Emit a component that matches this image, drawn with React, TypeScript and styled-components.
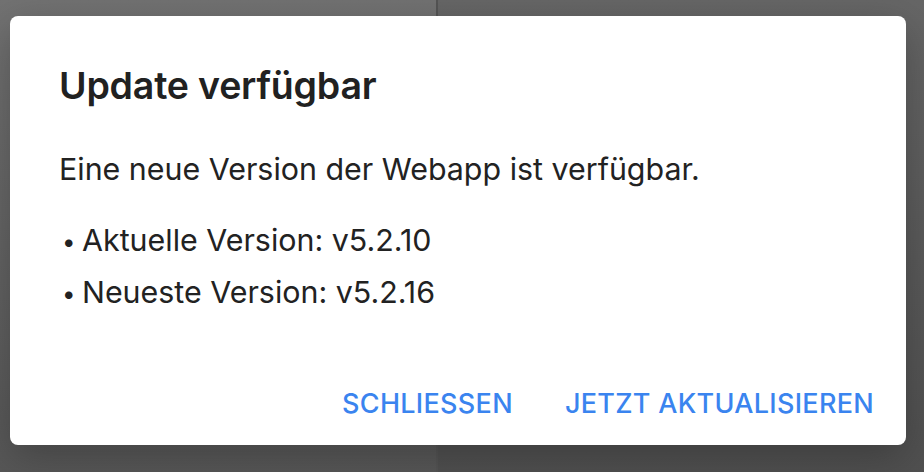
import styled, { createGlobalStyle } from "styled-components"

const GlobalStyle = createGlobalStyle`
  html, body {
    margin: 0;
    padding: 0;
    height: 100%;
  }
  body {
    font-family: Inter, "Noto Sans", sans-serif;
    -webkit-font-smoothing: antialiased;
  }
  #root {
    height: 100%;
  }
`

const Page = styled.div`
  position: relative;
  display: flex;
  width: 924px;
  height: 472px;
  overflow: hidden;
`

type PaneProps = {
  top: string,
  bottom: string
}

const Pane = styled.div<PaneProps>`
  background: linear-gradient(180deg, ${({top})=> top}, ${({bottom})=> bottom});
`

const LeftPane = styled(Pane)`
  width: 436px;
  border-right: 2px solid #545454;
`

const RightPane = styled(Pane)`
  flex: 1;
`

const Overlay = styled.div`
  position: absolute;
  inset: 0;
  display: flex;
  align-items: flex-start;
  padding: 16px 18px 0 10px;
`

const Dialog = styled.div`
  display: flex;
  flex-direction: column;
  width: 896px;
  height: 429px;
  box-sizing: border-box;
  background: #fff;
  border-radius: 8px;
  box-shadow: 0 12px 40px rgba(0, 0, 0, 0.25);
  padding: 47px 48px 0 49px;
`

const Title = styled.h2`
  margin: 0;
  font-size: 37.5px;
  line-height: 46px;
  font-weight: 600;
  color: #212121;
  letter-spacing: -0.2px;
`

const Text = styled.p`
  margin: 40px 0 0;
  font-size: 30.4px;
  line-height: 40px;
  color: #222;
`

const List = styled.ul`
  margin: 26px 0 0;
  padding: 0;
  list-style: none;
`

const Item = styled.li`
  font-size: 30.4px;
  line-height: 51px;
  color: #222;

  &::before {
    content: "•";
    display: inline-block;
    width: 20px;
    margin-left: 3px;
    font-size: 24px;
    vertical-align: 1px;
  }
`

const Actions = styled.div`
  margin-top: auto;
  display: flex;
  justify-content: flex-end;
  gap: 20px;
  padding: 0 0 11px;
  margin-right: -32px;
`

const Button = styled.button`
  border: none;
  background: none;
  padding: 14px 16px;
  font-family: inherit;
  font-size: 27px;
  font-weight: 500;
  letter-spacing: 0.3px;
  color: #3a84ef;
  cursor: pointer;
`

const App = () => {
  return (
    <>
      <GlobalStyle />
      <Page>
        <LeftPane top="#727272" bottom="#575757" />
        <RightPane top="#666666" bottom="#505050" />
        <Overlay>
          <Dialog role="dialog">
            <Title>Update verfügbar</Title>
            <Text>Eine neue Version der Webapp ist verfügbar.</Text>
            <List>
              <Item>Aktuelle Version: v5.2.10</Item>
              <Item>Neueste Version: v5.2.16</Item>
            </List>
            <Actions>
              <Button>SCHLIESSEN</Button>
              <Button>JETZT AKTUALISIEREN</Button>
            </Actions>
          </Dialog>
        </Overlay>
      </Page>
    </>
  )
}

export default App
